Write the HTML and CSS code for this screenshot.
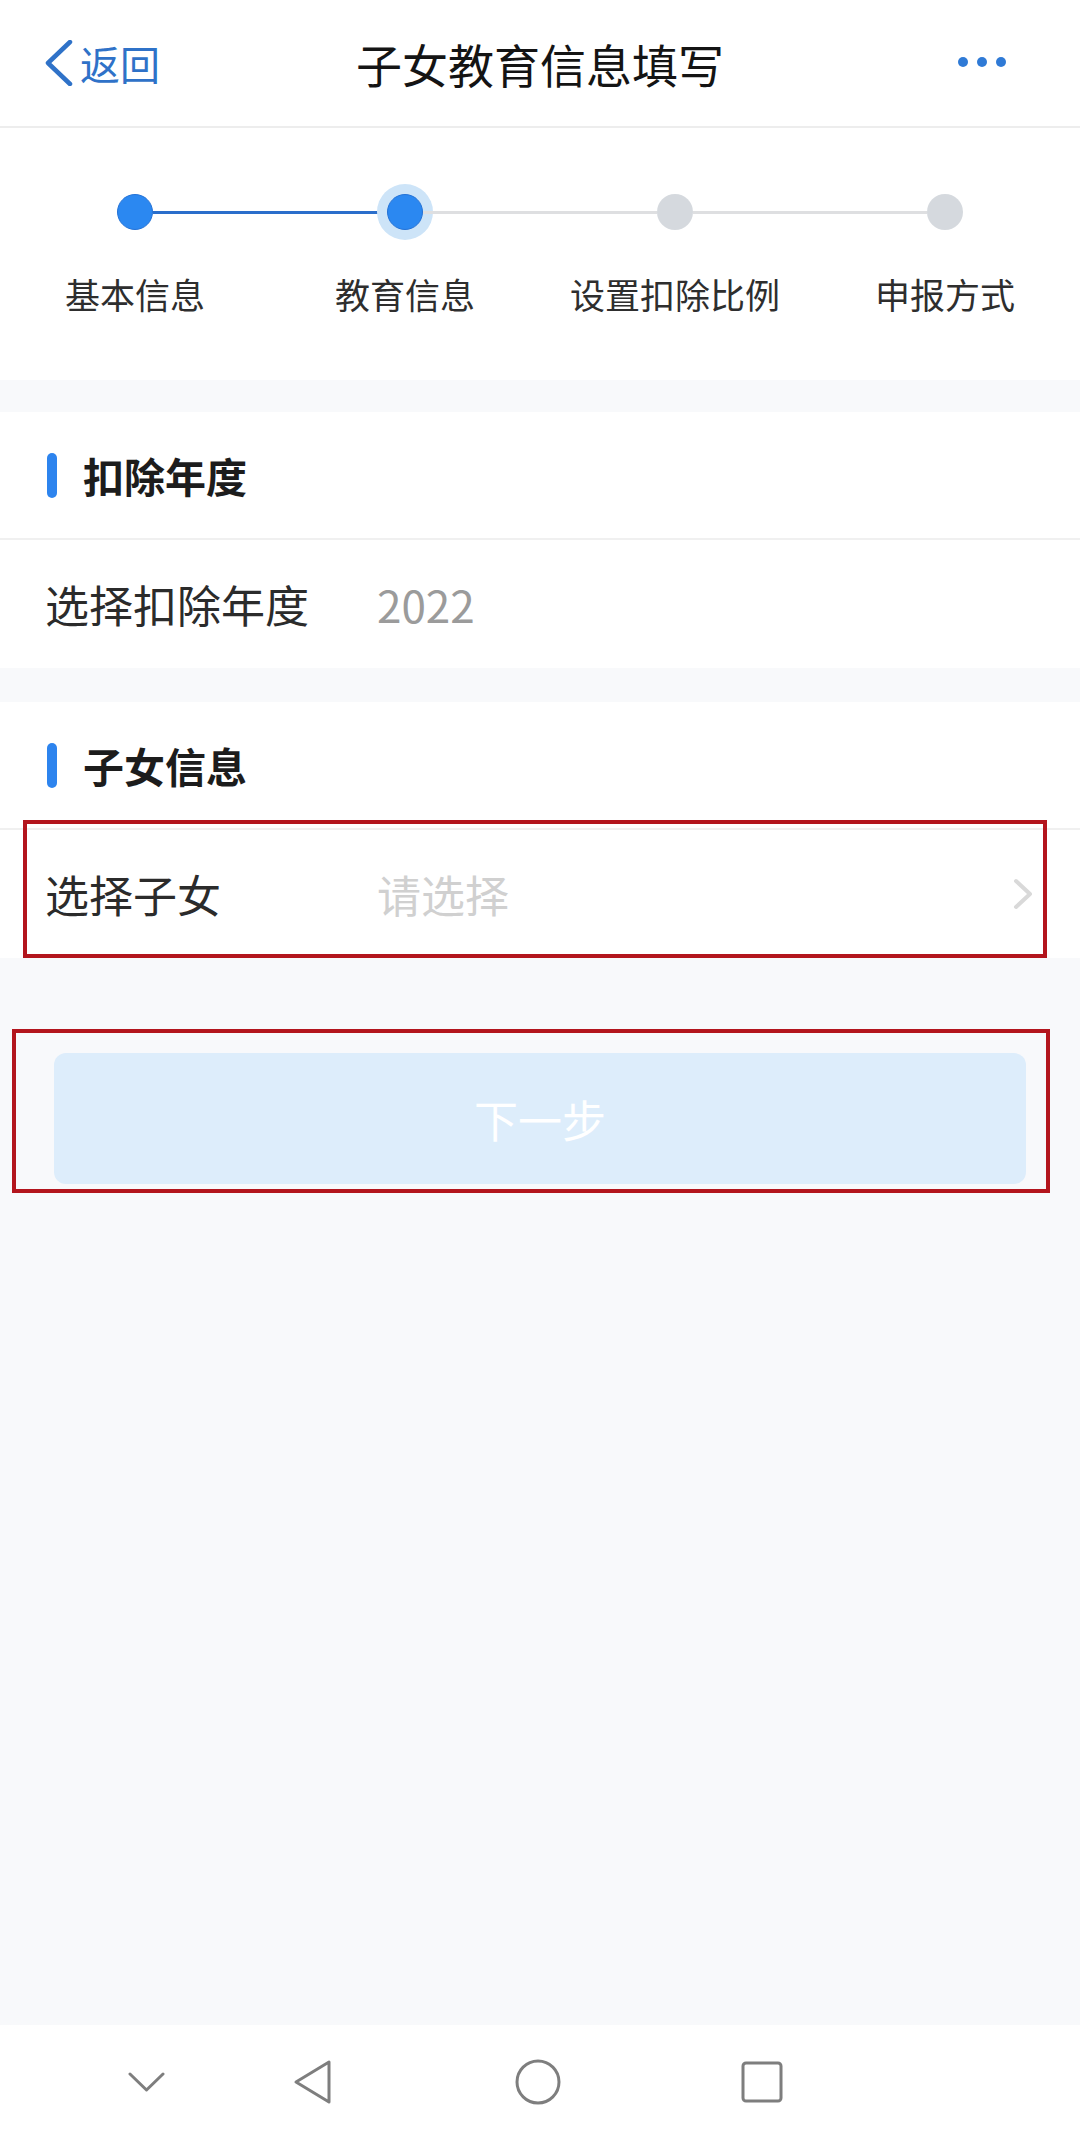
FILE: index.html
```html
<!DOCTYPE html>
<html lang="zh-CN">
<head>
<meta charset="utf-8">
<title>子女教育信息填写</title>
<link rel="stylesheet" href="styles.css">
</head>
<body>
<div class="app">
  <header class="topbar">
    <div class="back">
      <svg class="back-icon" width="28" height="46" viewBox="0 0 28 46"><polyline points="25,2 3,23 25,44" fill="none" stroke="#2f72c8" stroke-width="4.5" stroke-linecap="round" stroke-linejoin="round"/></svg>
      <span class="back-text">返回</span>
    </div>
    <h1 class="title">子女教育信息填写</h1>
    <div class="more"><i></i><i></i><i></i></div>
  </header>

  <main class="content">
    <section class="steps">
      <div class="track">
        <span class="dot done"></span>
        <span class="line on"></span>
        <span class="dot current"></span>
        <span class="line"></span>
        <span class="dot"></span>
        <span class="line"></span>
        <span class="dot"></span>
      </div>
      <div class="labels">
        <span>基本信息</span>
        <span>教育信息</span>
        <span>设置扣除比例</span>
        <span>申报方式</span>
      </div>
    </section>

    <section class="card">
      <div class="card-head"><span class="bar"></span><h2>扣除年度</h2></div>
      <div class="row">
        <span class="row-label">选择扣除年度</span>
        <span class="row-value">2022</span>
      </div>
    </section>

    <section class="card">
      <div class="card-head"><span class="bar"></span><h2>子女信息</h2></div>
      <div class="row marked">
        <span class="row-label">选择子女</span>
        <span class="row-value placeholder">请选择</span>
        <svg class="row-arrow" width="22" height="32" viewBox="0 0 22 32"><polyline points="4,3 18,16 4,29" fill="none" stroke="#d9d9d9" stroke-width="4" stroke-linecap="round" stroke-linejoin="round"/></svg>
        <span class="mark mark-row"></span>
      </div>
    </section>

    <div class="btn-wrap">
      <button class="next" type="button">下一步</button>
      <span class="mark mark-btn"></span>
    </div>
  </main>

  <nav class="sysnav">
    <svg class="nav-hide" width="37" height="20" viewBox="0 0 37 20"><polyline points="2,2 18.5,18 35,2" fill="none" stroke="#7e7e7e" stroke-width="3" stroke-linecap="round" stroke-linejoin="round"/></svg>
    <svg class="nav-back" width="40" height="46" viewBox="0 0 40 46"><path d="M36,3 L36,43 L3,23 Z" fill="none" stroke="#7e7e7e" stroke-width="3" stroke-linejoin="round"/></svg>
    <svg class="nav-home" width="46" height="46" viewBox="0 0 46 46"><circle cx="23" cy="23" r="21" fill="none" stroke="#7e7e7e" stroke-width="3"/></svg>
    <svg class="nav-recent" width="42" height="42" viewBox="0 0 42 42"><rect x="2" y="2" width="38" height="38" rx="3" fill="none" stroke="#7e7e7e" stroke-width="3"/></svg>
  </nav>
</div>
</body>
</html>
```

FILE: styles.css
```css
* { box-sizing: border-box; }
html, body { margin: 0; padding: 0; }
body {
  font-family: "Noto Sans CJK SC", "Noto Sans", sans-serif;
  color: #222;
  background: #ffffff;
}
.app {
  width: 1080px;
  height: 2132px;
  display: flex;
  flex-direction: column;
  overflow: hidden;
}

/* top bar */
.topbar {
  height: 128px;
  flex: none;
  display: grid;
  grid-template-columns: 1fr auto 1fr;
  align-items: center;
  background: #fff;
  border-bottom: 2px solid #ededed;
}
.back {
  display: flex;
  align-items: center;
  padding-left: 45px;
  color: #2f72c8;
}
.back-icon { display: block; }
.back-text {
  font-size: 40px;
  line-height: 48px;
  margin-left: 7px;
}
.title {
  margin: 0;
  font-size: 46px;
  font-weight: 400;
  line-height: 60px;
  color: #141414;
}
.more {
  justify-self: end;
  display: flex;
  gap: 9px;
  padding-right: 74px;
  padding-bottom: 2px;
}
.more i {
  width: 10px;
  height: 10px;
  border-radius: 50%;
  background: #2f7ad6;
}

/* content */
.content {
  flex: 1;
  background: #f8f9fb;
  display: flex;
  flex-direction: column;
}

.steps {
  background: #fff;
  padding: 66px 0 62px;
}
.track {
  display: flex;
  align-items: center;
  margin: 0 117px;
}
.dot {
  width: 36px;
  height: 36px;
  border-radius: 50%;
  background: #d5d9de;
  flex: none;
}
.dot.done, .dot.current {
  background: #2b88f1;
  border: 1px solid #2472d6;
}
.dot.current {
  box-shadow: 0 0 0 10px #cde4f8;
}
.line {
  flex: 1;
  height: 3px;
  background: #dedfe1;
}
.line.on { background: #2a6ecb; }
.labels {
  display: grid;
  grid-template-columns: repeat(4, 1fr);
  margin-top: 40px;
  font-size: 35px;
  line-height: 48px;
  color: #2e2e2e;
  text-align: center;
}

.card {
  background: #fff;
  margin-top: 32px;
}
.card + .card { margin-top: 34px; }
.card-head {
  height: 128px;
  display: flex;
  align-items: center;
  padding-left: 47px;
  border-bottom: 2px solid #f0f0f0;
}
.bar {
  width: 10px;
  height: 45px;
  border-radius: 5px;
  background: #2d84ee;
  margin-right: 26px;
}
.card-head h2 {
  margin: 0;
  font-size: 41px;
  font-weight: 700;
  line-height: 52px;
  color: #1c1c1c;
}
.row {
  height: 128px;
  display: flex;
  align-items: center;
  padding: 0 46px 0 45px;
  position: relative;
}
.row-label {
  width: 332px;
  font-size: 44px;
  line-height: 56px;
  color: #2b2b2b;
}
.row-value {
  flex: 1;
  font-size: 44px;
  line-height: 56px;
  color: #9b9b9b;
}
.row-value.placeholder { color: #d0d0d0; }
.row-arrow { display: block; }

/* annotation boxes */
.mark {
  position: absolute;
  border: 4px solid #b3151d;
  pointer-events: none;
}
.mark-row {
  top: -10px;
  bottom: 0;
  left: 23px;
  right: 33px;
}
.btn-wrap {
  position: relative;
  margin: 95px 54px 0;
}
.next {
  display: block;
  width: 100%;
  height: 131px;
  border: none;
  border-radius: 12px;
  background: #ddedfb;
  color: #fff;
  font-family: "Noto Sans CJK SC", "Noto Sans", sans-serif;
  font-size: 44px;
  line-height: 56px;
  padding: 0;
}
.mark-btn {
  top: -24px;
  bottom: -9px;
  left: -42px;
  right: -24px;
}

/* system navigation */
.sysnav {
  height: 107px;
  flex: none;
  background: #fff;
  display: flex;
  align-items: center;
  padding-left: 128px;
  padding-top: 6px;
}
.sysnav svg { display: block; flex: none; }
.nav-back { margin-left: 128px; }
.nav-home { margin-left: 182px; }
.nav-recent { margin-left: 180px; }
```
